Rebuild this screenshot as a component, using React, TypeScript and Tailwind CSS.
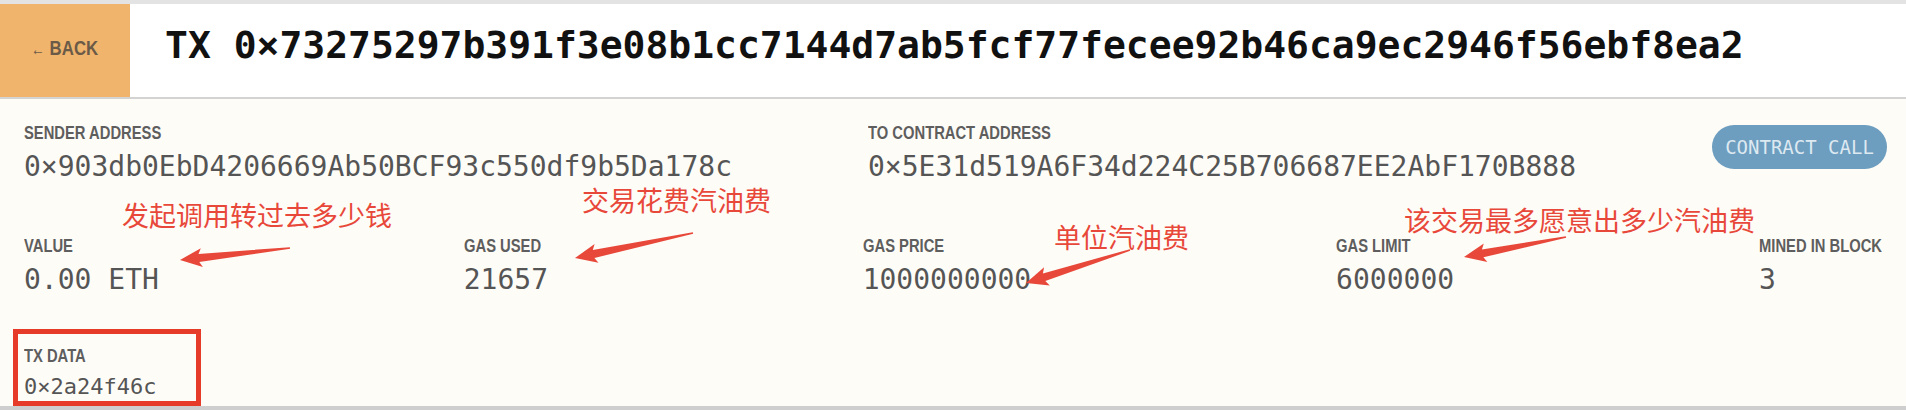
import React from "react";

const mono = "font-['DejaVu_Sans_Mono','Liberation_Mono',monospace]";
const sans = "font-['Liberation_Sans',Arial,sans-serif]";
const label = `block origin-left scale-x-[0.82] whitespace-nowrap ${sans} text-[18px] leading-[20px] font-bold text-[#5e5e5e]`;
const value = `${mono} text-[28px] leading-[34px] text-[#555555] whitespace-nowrap`;
const note =
  "absolute whitespace-nowrap font-['Noto_Sans_CJK_SC','Noto_Sans',sans-serif] text-[27px] leading-[27px] text-[#e8483a]";

const stats = [
  { label: "VALUE", value: "0.00 ETH" },
  { label: "GAS USED", value: "21657" },
  { label: "GAS PRICE", value: "1000000000" },
  { label: "GAS LIMIT", value: "6000000" },
  { label: "MINED IN BLOCK", value: "3", width: "w-[128px]" }
];

// red annotation arrows: [tailX, tailY, tipX, tipY]
const arrows: [number, number, number, number][] = [
  [290, 248, 180, 260],
  [693, 233, 575, 258],
  [1130, 250, 1026, 283],
  [1566, 237, 1464, 257]
];

function arrowPoints([x1, y1, x2, y2]: [number, number, number, number]) {
  const dx = x2 - x1;
  const dy = y2 - y1;
  const len = Math.hypot(dx, dy);
  const ux = dx / len;
  const uy = dy / len;
  const nx = -uy;
  const ny = ux;
  const bx = x2 - ux * 22;
  const by = y2 - uy * 22;
  const pt = (x: number, y: number) => `${x.toFixed(1)},${y.toFixed(1)}`;
  return [
    pt(x1 + nx * 0.8, y1 + ny * 0.8),
    pt(bx + ux * 3 + nx * 4, by + uy * 3 + ny * 4),
    pt(bx + nx * 9.5, by + ny * 9.5),
    pt(x2, y2),
    pt(bx - nx * 9.5, by - ny * 9.5),
    pt(bx + ux * 3 - nx * 4, by + uy * 3 - ny * 4),
    pt(x1 - nx * 0.8, y1 - ny * 0.8)
  ].join(" ");
}

function Field({ title, text }: { title: string; text: string }) {
  return (
    <div>
      <div className={label}>{title}</div>
      <div className={`mt-[7px] ${value}`}>{text}</div>
    </div>
  );
}

export default function App() {
  return (
    <div className="relative h-[410px] w-[1906px] overflow-hidden bg-[#e3e3e3] pt-[4px]">
      <header className="flex h-[95px] border-b-2 border-[#d3d3d3] bg-white">
        <button className="flex w-[130px] items-start justify-center bg-[#f0b46d] pt-[33px] text-[#6b5a47]">
          <span className={`inline-block scale-x-[0.8] whitespace-nowrap ${sans} text-[21px] leading-[22px] font-bold`}>
            <span className="text-[17px] font-normal">←</span> BACK
          </span>
        </button>
        <h1
          className={`${mono} pl-[35px] pt-[18px] text-[38px] leading-[46px] font-bold text-[#111111]`}
        >
          TX 0×73275297b391f3e08b1cc7144d7ab5fcf77fecee92b46ca9ec2946f56ebf8ea2
        </h1>
      </header>

      <main className="h-[307px] bg-[#fefcf7] pl-[24px] pr-[19px] pt-[24px]">
        <div className="flex items-start justify-between">
          <Field title="SENDER ADDRESS" text="0×903db0EbD4206669Ab50BCF93c550df9b5Da178c" />
          <Field title="TO CONTRACT ADDRESS" text="0×5E31d519A6F34d224C25B706687EE2AbF170B888" />
          <div
            className={`${mono} mt-[2px] flex h-[44px] w-[175px] items-center justify-center rounded-full bg-[#6d9dbf] text-[19px] text-[#dde9f1]`}
          >
            CONTRACT CALL
          </div>
        </div>

        <div className="mt-[52px] flex items-start justify-between">
          {stats.map((s) => (
            <div key={s.label} className={s.width}>
              <div className={label}>{s.label}</div>
              <div className={`mt-[7px] ${value}`}>{s.value}</div>
            </div>
          ))}
        </div>

        <div className="mt-[49px]">
          <div className={label}>TX DATA</div>
          <div className={`${mono} mt-[7px] text-[22px] leading-[28px] text-[#555555]`}>0×2a24f46c</div>
        </div>
      </main>
      <div className="h-[4px] bg-[#cecece]" />

      {/* screenshot annotations */}
      <span className={`${note} left-[122px] top-[201px]`}>发起调用转过去多少钱</span>
      <span className={`${note} left-[582px] top-[186px]`}>交易花费汽油费</span>
      <span className={`${note} left-[1054px] top-[223px]`}>单位汽油费</span>
      <span className={`${note} left-[1404px] top-[206px]`}>该交易最多愿意出多少汽油费</span>
      <div className="absolute left-[13px] top-[329px] h-[77px] w-[188px] border-[5px] border-[#e63b29]" />
      <svg className="pointer-events-none absolute left-0 top-0" width="1906" height="410">
        {arrows.map((a, i) => (
          <polygon key={i} points={arrowPoints(a)} fill="#e8483a" />
        ))}
      </svg>
    </div>
  );
}
